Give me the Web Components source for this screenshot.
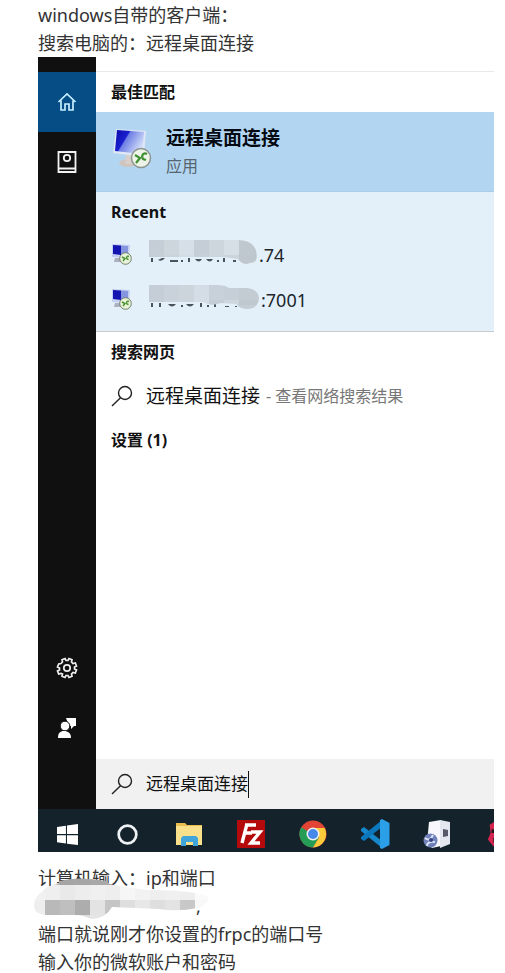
<!DOCTYPE html>
<html lang="zh-CN">
<head>
<meta charset="utf-8">
<title>远程桌面连接</title>
<style>
body{margin:0;background:#fff;color:#333;font:18px/28px "Noto Sans","Noto Sans CJK SC",sans-serif}
</style>
</head>
<body>
<article-page></article-page>
<script>
const define=(name,html)=>customElements.define(name,class extends HTMLElement{
  constructor(){super();this.attachShadow({mode:'open'}).innerHTML=html;}
});
const monitor=`<defs><linearGradient id="s" x2="1" y2=".5"><stop stop-color="#0809a8"/><stop offset=".42" stop-color="#1b20cf"/><stop offset=".46" stop-color="#6d7de4"/><stop offset="1" stop-color="#cfdcf8"/></linearGradient></defs>
<ellipse cx="15" cy="35" rx="9" ry="4" fill="#cfc5c0"/><path d="M13 26l8 3-1 7h-8z" fill="#d8cfca"/>
<path d="M3 1l30 2-2 26-31-4z" fill="#dfe6f5"/><path d="M4 2l27 2-2 22-27-3z" fill="url(#s)"/>
<circle cx="28" cy="30" r="9.5" fill="#edf3e6" stroke="#8d9690" stroke-width="1.5"/>
<path d="M22 27l5 3-4 5M34 26c-4-2-6 2-4 5l3 1" fill="none" stroke="#3f9134" stroke-width="2.2"/>`;
const icons={
home:['0 0 20 20',`<path d="M1.5 10L10 2l8.500 8M4 8.500V18h4v-6h4v6h4V8.500" fill="none" stroke="#c5efff" stroke-width="1.700"/>`],
journal:['0 0 20 22',`<path d="M1.500 1h17v20h-17zM2 17.500h16" fill="none" stroke="#f2f2f2" stroke-width="1.800"/><circle cx="10" cy="7" r="3.200" fill="none" stroke="#f2f2f2" stroke-width="1.800"/>`],
gear:['0 0 22 22',`<path d="M9 1.500l1 2h2l1-2 3 1.200-.5 2.300 1.500 1.500 2.300-.5 1.200 3-2 1v2l2 1-1.200 3-2.300-.5-1.500 1.500.5 2.300-3 1.200-1-2h-2l-1 2-3-1.200.5-2.300L5 16.500l-2.300.5-1.200-3 2-1v-2l-2-1 1.200-3L5 6.500 6.500 5 6 2.700z" fill="none" stroke="#eee" stroke-width="1.700"/><circle cx="11" cy="11" r="3.200" fill="none" stroke="#eee" stroke-width="1.700"/>`],
person:['0 0 20 22',`<path d="M9 1h10v8h-2l-3 3V9h-2z" fill="#fff"/><circle cx="8" cy="9" r="4.800" fill="#fff" stroke="#101010"/><path d="M1 21c0-5 2-7 6-7s7 2 7 7z" fill="#fff"/>`],
search:['0 0 22 22',`<circle cx="14" cy="8" r="6.500" fill="none" stroke="#222" stroke-width="1.400"/><path d="M9.500 12.800L1 21" stroke="#222" stroke-width="1.400"/>`],
remote:['0 0 39 41',monitor],
mini:['0 0 20 21',`<path d="M0 0l18 1-1 13-17-1z" fill="#c3d0f2"/><path d="M1 1l8 .5V11L1 10z" fill="#1414b0"/><path d="M9 1.500l7 .5v8l-7 1z" fill="#8595df"/><path d="M3 14h7v4H2z" fill="#aab0be"/><circle cx="13.500" cy="14.500" r="5.800" fill="#e8f2d8" stroke="#74806c" stroke-width="1"/><path d="M10 13l3 1.500-2 2.500M17 12.500c-2-1-3 .5-2 2.500l1.500.5" fill="none" stroke="#47902f" stroke-width="1.400"/>`],
win:['0 0 20 20',`<path d="M0 2.800l8.500-1.200v8H0zM9.500 1.500L20 0v9.600H9.500zM0 10.600h8.500v8L0 17.400zM9.500 10.600H20V20L9.500 18.700z" fill="#fff"/>`],
ring:['0 0 20 20',`<circle cx="10" cy="10" r="8.400" fill="none" stroke="#eef2f4" stroke-width="2.600"/>`],
folder:['0 0 28 24',`<path d="M1 1h9l2 2h15v20H1z" fill="#e9bd4f"/><path d="M1 4h26v19H1z" fill="#fbe08b"/><path d="M6 24v-8l2-2h13l2 2v8h-5v-4h-7v4z" fill="#42a5d9"/>`],
fz:['0 0 28 28',`<path d="M0 0h28v28H0z" fill="#b50a0c"/><path d="M8 5h11M7 13h8M10 4L5 23M14 12h9l-9 11h9" fill="none" stroke="#fff" stroke-width="3.400"/>`],
chrome:['0 0 28 28',`<circle cx="14" cy="14" r="13.500" fill="#e24435"/><path d="M2.300 7.200A13.500 13.500 0 0014 27.500l6-10-6-3z" fill="#269d57"/><path d="M14 27.500A13.500 13.500 0 0025.700 8H14l6 9.500z" fill="#fbcb39"/><circle cx="14" cy="14" r="6.500" fill="#f2f2f2"/><circle cx="14" cy="14" r="5" fill="#4789e8"/>`],
code:['0 0 30 30',`<path d="M1 10l3-2 18 14v7L1 12z" fill="#1687cb"/><path d="M1 20l3 2L22 8V1L1 18z" fill="#0b78bd"/><path d="M22 0l7.500 4v22L22 30l-2-1V1z" fill="#2ba0e8"/>`],
server:['0 0 28 28',`<path d="M6 2l12-2v26l-9 2-5-5z" fill="#f8f8fc"/><path d="M17 0l10 2v22l-10 4z" fill="#e4e7ef"/><path d="M20 9l5 1v6l-5 1z" fill="#555968"/><circle cx="7.500" cy="20.500" r="7" fill="#7080ba"/><path d="M2 18q5 4 8-3M4 26q0-5 8-4" stroke="#dbe2f8" stroke-width="2" fill="none"/><circle cx="8" cy="20" r="2" fill="#35427f"/>`],
figure:['0 0 28 30',`<path d="M4 5l8-5 14 5v23H8l-6-7 3-7z" fill="#d42450"/><path d="M8 10h14v12H10z" fill="#f1c4a4"/><path d="M6 10h12v4H6zM8 19h10v5H8z" fill="#25151d"/><path d="M9 14h6v4H9z" fill="#fff"/>`]
};
customElements.define('ui-icon',class extends HTMLElement{
  connectedCallback(){
    if(this.shadowRoot)return;
    const [box,body]=icons[this.getAttribute('name')];
    this.attachShadow({mode:'open'}).innerHTML=`<style>:host{display:block;flex:none;width:20px;height:20px}svg{display:block;width:100%;height:100%}</style><svg viewBox="${box}" aria-hidden="true">${body}</svg>`;
  }
});
/* Pixelated cover over private values: rows of tone values on a 15px grid */
const masks={
a:{w:110,h:28,clip:'M0 2H88Q104 2 107 13Q110 25 101 25Q94 28 89 21L74 19H0Z',y:[2,17,22],rows:[['c5ced6','cdd6dd','d6dfe7','c5ced6','cdd6dd','d6dee6','bfc8ce','bcc6cc'],['c6cfd6','cad3da','d3dce3','c7cfd7','cdd5dc','cbd4db','bec7ce','bcc6cd'],['c6cfd6','cad3da','c9d2d9','c4ccd3','c9d2d9','bec7ce','c0c8ce','bdc6cc']],
 ink:'M2 20h2v4h-2zM9 22q4 2 7-2h-3zM21 22h8v2h-8zM32 22h2v2h-2zM39 20h2v4h-2zM46 21q4 5 7 0zM57 21q4 5 7 0zM68 22h2v2h-2zM74 20h2v4h-2zM84 22h3v2h-3z'},
b:{w:112,h:28,clip:'M0 2H68Q76 2 80 5H98Q109 6 110 15Q109 26 98 26Q91 26 87 21L72 20Q62 24 54 19H0Z',y:[2,17,22],rows:[['c5ced6','c9d2da','ccd5dc','d4dde5','c8d1d9','c6cfd7','c3ccd3','c3ccd3'],['c5ced6','ccd5dc','ccd5dc','d4dde5','c4cdd5','ced7de','bec8ce','bec8ce'],['c5ced6','ccd5dc','ccd5dc','c7d0d7','c4cdd5','c5ced5','c5cdd4','c6ced5']],
 ink:'M2 20h2v4h-2zM10 20h2v4h-2zM19 21q4 5 8 0zM32 22h2v2h-2zM37 21q4 5 8 0zM51 20h2v4h-2zM58 22h2v2h-2zM65 20h2v4h-2zM76 23h4v1h-4zM86 23h2v1h-2z'},
c:{w:176,h:46,clip:'M25 5Q44 0 72 5L76 8Q94 12 116 14Q154 14 174 20Q176 27 164 32Q143 36 125 33L78 31Q72 42 58 43Q48 39 42 39H12Q0 38 0 30Q0 21 8 16Q12 9 25 8Z',y:[0,9,24,39],rows:[['aaa','aaa','a5a5a5','a5a5a5','a8a8a8','aaa','aaa','aaa','aaa','aaa','aaa','aaa'],['f1f1f1','efefef','e9e9e9','ededed','f0f0f0','eee','f6f6f6','f2f2f2','eee','f0f0f0','eee','fafafa'],['eee','b9b9b9','bfbfbf','adadad','e3e3e3','c5c5c5','dedede','e7e7e7','dedede','e3e3e3','c8c8c8','f8f8f8'],['ddd','ddd','ddd','ddd','e5e5e5','ddd','ddd','ddd','ddd','ddd','ddd','ddd']],ink:''}
};
customElements.define('pixel-mask',class extends HTMLElement{
  connectedCallback(){
    if(this.shadowRoot)return;
    const m=masks[this.getAttribute('kind')],off=m.w===176?-4:0;
    const cells=m.rows.map((r,j)=>r.map((c,i)=>`<rect x="${i*15+off}" y="${j?m.y[j]:0}" width="15" height="${(m.y[j+1]??m.h)-(j?m.y[j]:0)}" fill="#${c}"/>`).join('')).join('');
    this.attachShadow({mode:'open'}).innerHTML=`<style>:host{display:block;flex:none}svg{display:block}</style><svg width="${m.w}" height="${m.h}" aria-hidden="true"><path d="${m.ink}" fill="#4a535a"/><clipPath id="c"><path d="${m.clip}"/></clipPath><g clip-path="url(#c)" shape-rendering="crispEdges">${cells}</g></svg>`;
  }
});
define('side-rail',`<style>
:host{display:flex;flex-direction:column;flex:none;width:58px;background:#101010;padding:15px 0 51px;box-sizing:border-box}
button{all:unset;display:grid;place-items:center;height:60px}
.on{background:#064c85}.push{margin-top:auto}
ui-icon[name=gear],ui-icon[name=person]{width:22px;height:22px}ui-icon[name=journal]{height:22px}
</style>
<button class="on" aria-label="主页"><ui-icon name="home"></ui-icon></button>
<button aria-label="笔记本"><ui-icon name="journal"></ui-icon></button>
<button class="push" aria-label="设置"><ui-icon name="gear"></ui-icon></button>
<button aria-label="反馈"><ui-icon name="person"></ui-icon></button>`);
define('group-title',`<style>:host{display:block}h2{margin:0;padding:0 15px;font-size:16px;line-height:40px;font-weight:700;color:#111}</style><h2><slot></slot></h2>`);
define('best-match',`<style>
:host{display:block}
button{all:unset;display:flex;gap:14px;box-sizing:border-box;width:100%;height:80px;padding:12px 17px;background:#b2d6f1;border-bottom:1px solid #aacdec}
ui-icon{width:39px;height:41px;margin-top:4px}
strong,small{display:block}strong{font-size:19px;line-height:28px;color:#050a12}small{font-size:16px;line-height:28px;color:#56656f}
</style><button><ui-icon name="remote"></ui-icon><span><strong><slot></slot></strong><small><slot name="kind"></slot></small></span></button>`);
define('recent-item',`<style>
:host{display:block}
button{all:unset;display:flex;align-items:center;box-sizing:border-box;width:100%;height:45px;padding:0 16px;font-size:18px;color:#20262b}
ui-icon{width:20px;height:21px;margin-right:17px}::slotted(pixel-mask){align-self:flex-start;margin-top:6px}
</style><button><ui-icon name="mini"></ui-icon><slot></slot></button>`);
define('web-result',`<style>
:host{display:block}
a{display:flex;align-items:center;height:48px;padding:0 15px;color:#111;text-decoration:none;font-size:19px;white-space:nowrap}
ui-icon{width:22px;height:22px;margin-right:13px}small{font-size:16px;color:#777;margin-left:6px}
</style><a href="#"><ui-icon name="search"></ui-icon><slot></slot><small><slot name="hint"></slot></small></a>`);
define('search-field',`<style>
:host{display:block;margin-top:auto}
label{display:flex;align-items:center;height:50px;padding:0 15px;background:#f1f1f1}
ui-icon{width:22px;height:22px;margin-right:13px}
input{all:unset;font-size:17px;line-height:28px;width:6em;color:#111}
i{width:1px;height:27px;background:#111}
</style><label><ui-icon name="search"></ui-icon><input type="text" aria-label="搜索" value="远程桌面连接"><i></i></label>`);
define('search-panel',`<style>
:host{display:flex;flex-direction:column;flex:1;min-width:0;background:#fff}
.top{margin-top:14px;border-top:1px solid #e8e8e8}
.recent{background:#e3f0fa;border-bottom:1px solid #c8cdd1;padding-bottom:9px}
</style>
<div class="top"><group-title>最佳匹配</group-title></div>
<best-match>远程桌面连接<span slot="kind">应用</span></best-match>
<section class="recent"><group-title>Recent</group-title>
<recent-item><pixel-mask kind="a"></pixel-mask>.74</recent-item>
<recent-item><pixel-mask kind="b"></pixel-mask>:7001</recent-item></section>
<group-title>搜索网页</group-title>
<web-result>远程桌面连接<span slot="hint">- 查看网络搜索结果</span></web-result>
<group-title>设置 (1)</group-title>
<search-field></search-field>`);
define('task-bar',`<style>
:host{display:flex;height:43px;background:#13222b;overflow:hidden}
button{all:unset;display:grid;place-items:center;flex:none;width:62px;padding-top:7px;box-sizing:border-box}
button:first-of-type{width:58px}ui-icon{width:28px;height:28px}
ui-icon[name=win],ui-icon[name=ring]{width:21px;height:21px}ui-icon[name=folder]{height:24px}ui-icon[name=code]{width:30px;height:30px}
</style>
<button aria-label="开始"><ui-icon name="win"></ui-icon></button><button aria-label="Cortana"><ui-icon name="ring"></ui-icon></button><button aria-label="文件资源管理器"><ui-icon name="folder"></ui-icon></button><button aria-label="FileZilla"><ui-icon name="fz"></ui-icon></button><button aria-label="Chrome"><ui-icon name="chrome"></ui-icon></button><button aria-label="VS Code"><ui-icon name="code"></ui-icon></button><button aria-label="服务器"><ui-icon name="server"></ui-icon></button><button aria-label="应用"><ui-icon name="figure"></ui-icon></button>`);
define('start-menu',`<style>
:host{display:block}.body{display:flex;min-height:752px}
</style><div class="body"><side-rail></side-rail><search-panel></search-panel></div><task-bar></task-bar>`);
define('article-page',`<style>
:host{display:block;padding:1px 11px 0 38px}
p{margin:0}start-menu{margin-bottom:12px}
.private{position:relative;height:28px;padding-left:158px}
pixel-mask{position:absolute;left:-4px;top:-16px}
</style>
<p>windows自带的客户端：</p><p>搜索电脑的：远程桌面连接</p>
<start-menu></start-menu>
<p>计算机输入：ip和端口</p>
<p class="private">,<pixel-mask kind="c"></pixel-mask></p>
<p>端口就说刚才你设置的frpc的端口号</p><p>输入你的微软账户和密码</p>`);
</script>
</body>
</html>
